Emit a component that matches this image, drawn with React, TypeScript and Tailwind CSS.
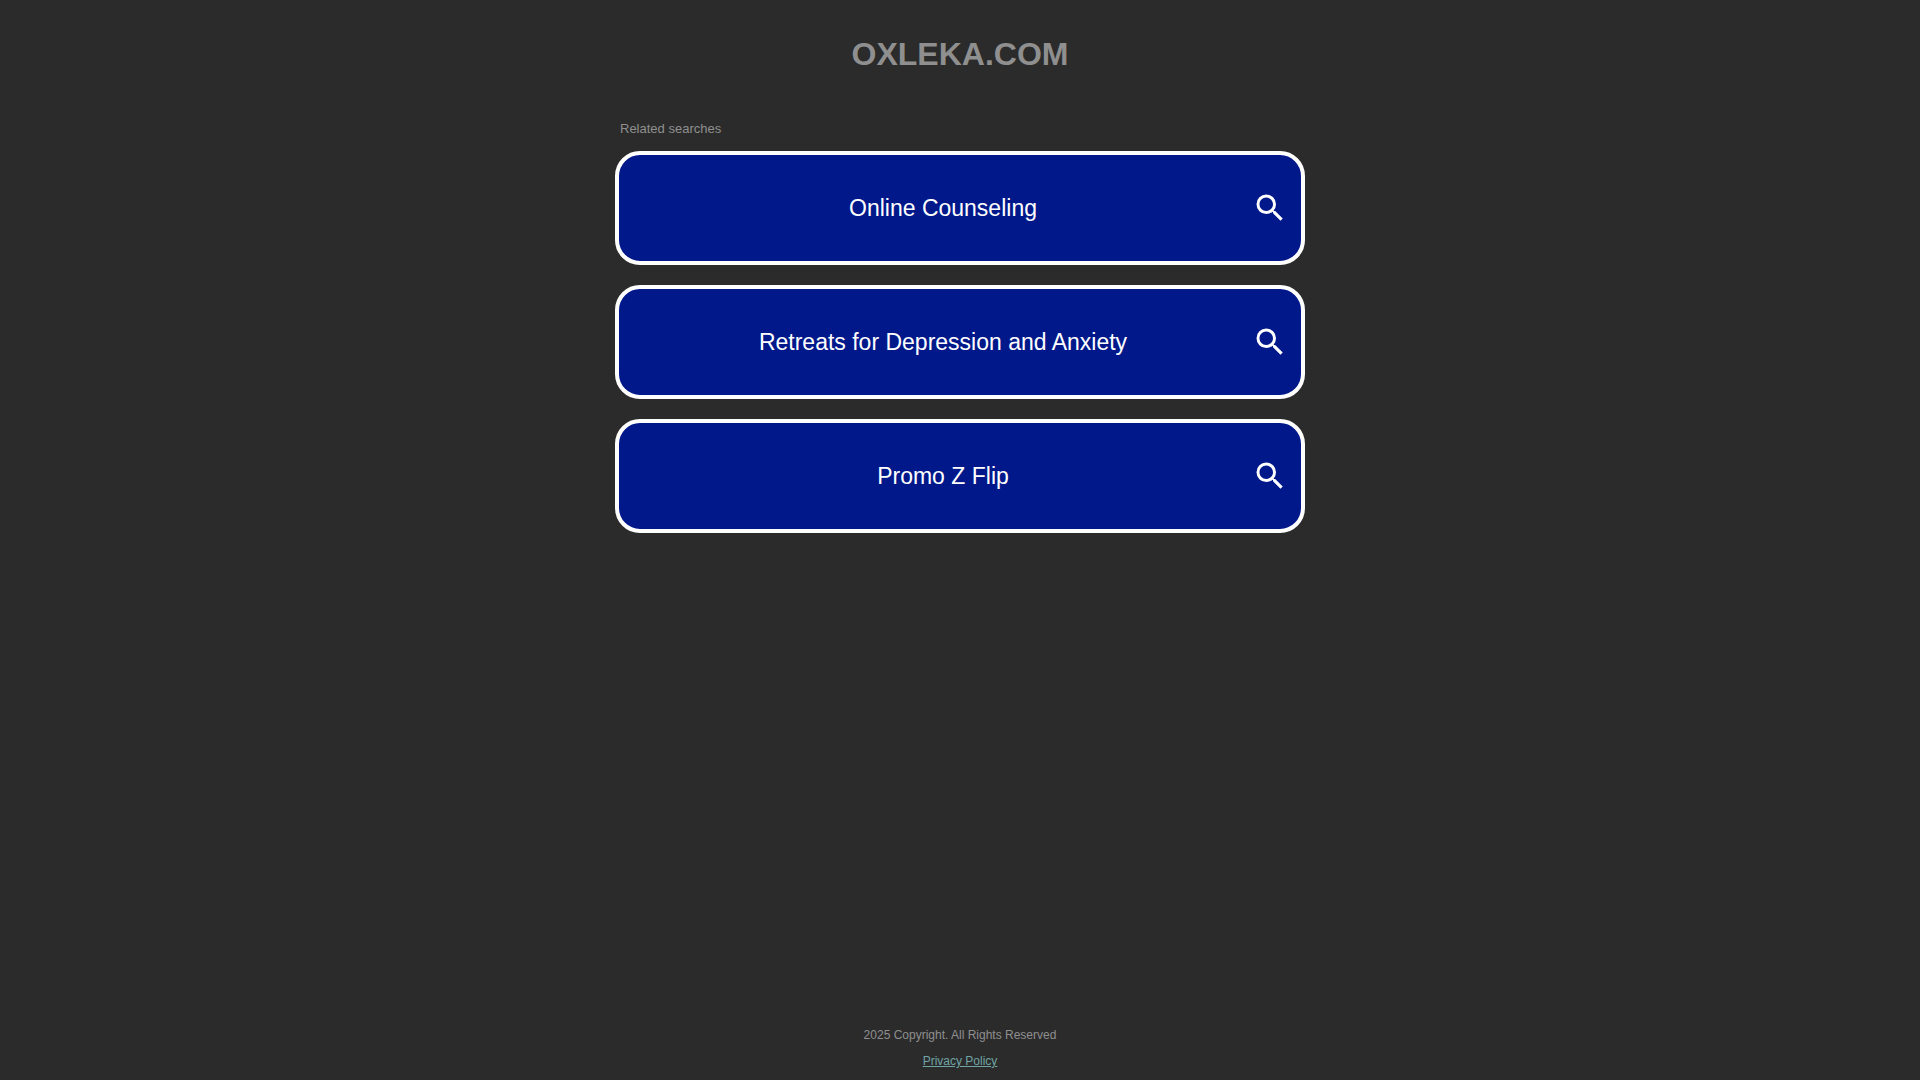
import { MdSearch } from "react-icons/md";

const SEARCHES = ["Online Counseling", "Retreats for Depression and Anxiety", "Promo Z Flip"];

function SearchLink({ label }: { label: string }) {
  return (
    <a
      href="#"
      className="flex items-center rounded-[25px] border-4 border-white bg-[#00188a] py-8 pl-[15px] pr-[13px] text-white"
    >
      <span className="flex-1 text-center text-[23px] leading-[42px]">{label}</span>
      <MdSearch className="size-9 shrink-0" aria-hidden="true" />
    </a>
  );
}

export default function App() {
  return (
    <div className="flex min-h-screen flex-col bg-[#2b2b2b] font-['Liberation_Sans',Arial,sans-serif] text-[#8f8f8f]">
      <header className="px-4 pt-9 text-center">
        <h1 className="text-[32px] font-bold leading-9">OXLEKA.COM</h1>
      </header>

      <main className="mx-auto w-full max-w-[690px] flex-1 pt-12">
        <h2 className="px-[5px] pb-3.5 text-[13px] leading-[17px]">Related searches</h2>
        <nav className="flex flex-col gap-5" aria-label="Related searches">
          {SEARCHES.map((label) => (
            <SearchLink key={label} label={label} />
          ))}
        </nav>
      </main>

      <footer className="flex flex-col items-center gap-3 px-4 pb-3 text-xs leading-[14px]">
        <p>2025 Copyright. All Rights Reserved</p>
        <a href="#" className="text-[#70a4a5] underline">
          Privacy Policy
        </a>
      </footer>
    </div>
  );
}
